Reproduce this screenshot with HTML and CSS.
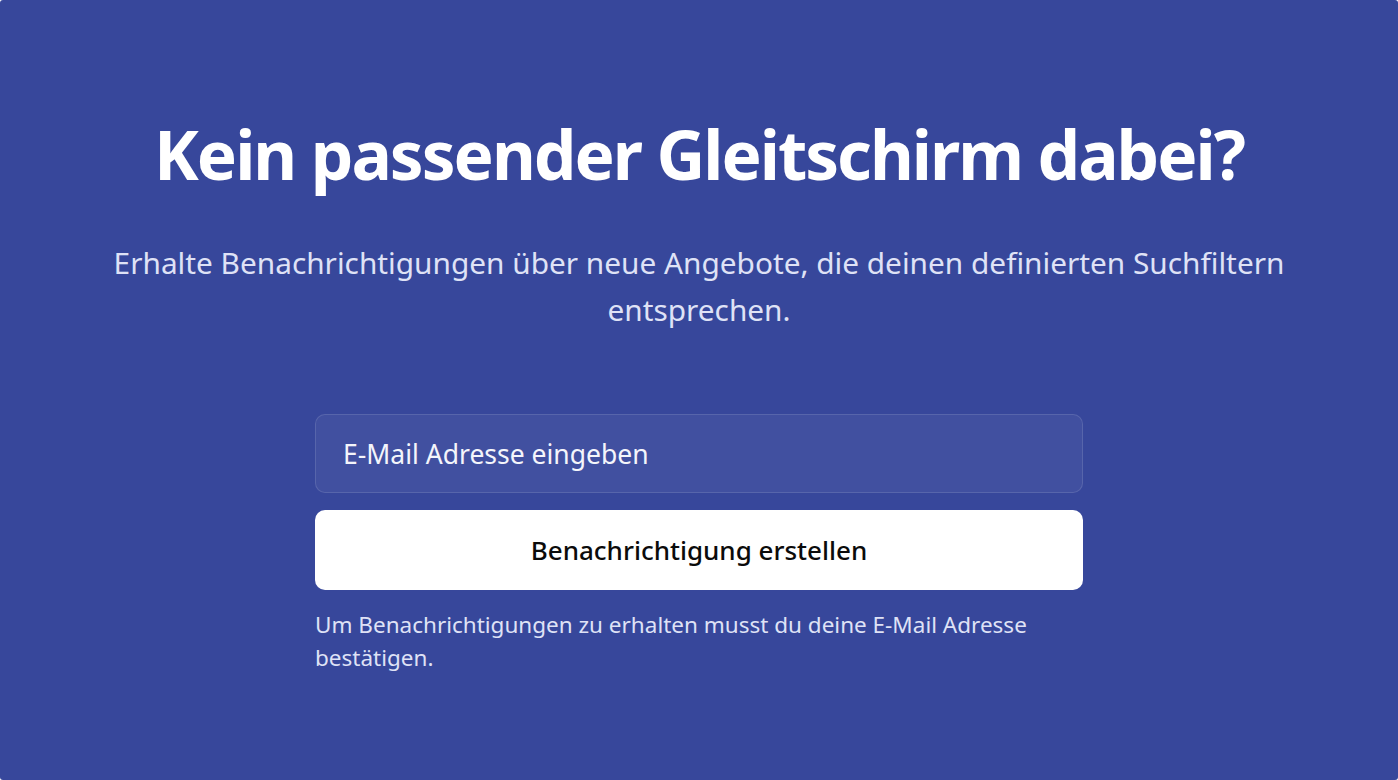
FILE: index.html
```html
<!DOCTYPE html>
<html lang="de">
<head>
<meta charset="utf-8">
<title>Gleitschirm Benachrichtigung</title>
<link rel="stylesheet" href="styles.css">
</head>
<body>
<section class="cta">
  <h1 class="cta-title">Kein passender Gleitschirm dabei?</h1>
  <p class="cta-lead">Erhalte Benachrichtigungen über neue Angebote, die deinen definierten Suchfiltern entsprechen.</p>
  <form class="cta-form">
    <input class="cta-input" type="email" placeholder="E-Mail Adresse eingeben">
    <button class="cta-button" type="button">Benachrichtigung erstellen</button>
    <p class="cta-note">Um Benachrichtigungen zu erhalten musst du deine E-Mail Adresse bestätigen.</p>
  </form>
</section>
</body>
</html>
```

FILE: styles.css
```css
* { box-sizing: border-box; }
html, body { margin: 0; padding: 0; background: #ffffff; }
body {
  font-family: "Noto Sans", "Open Sans", "DejaVu Sans", sans-serif;
}
.cta {
  width: 1398px;
  height: 780px;
  background: #37479b;
  border-radius: 3px;
  display: flex;
  flex-direction: column;
  align-items: center;
  padding: 108px 60px 0;
}
.cta-title {
  margin: 0;
  color: #ffffff;
  font-size: 67.5px;
  font-weight: 700;
  line-height: 92px;
  letter-spacing: -2px;
  text-align: center;
}
.cta-lead {
  margin: 39px 0 0;
  max-width: 1240px;
  color: #dfe2f6;
  font-size: 29.8px;
  line-height: 47px;
  text-align: center;
}
.cta-form {
  margin-top: 81px;
  width: 768px;
  display: flex;
  flex-direction: column;
}
.cta-input {
  height: 79px;
  width: 100%;
  padding: 0 27px;
  background: rgba(255, 255, 255, 0.05);
  border: 1px solid rgba(255, 255, 255, 0.12);
  border-radius: 10px;
  color: #ffffff;
  font-family: inherit;
  font-size: 26.5px;
  outline: none;
}
.cta-input::placeholder { color: #f4f5fb; opacity: 1; }
.cta-button {
  margin-top: 17px;
  height: 80px;
  width: 100%;
  background: #ffffff;
  border: none;
  border-radius: 10px;
  color: #0b0b0b;
  font-family: inherit;
  font-size: 26px;
  font-weight: 500;
}
.cta-note {
  margin: 18px 0 0;
  color: #dfe2f6;
  font-size: 22.5px;
  line-height: 33px;
}
```
